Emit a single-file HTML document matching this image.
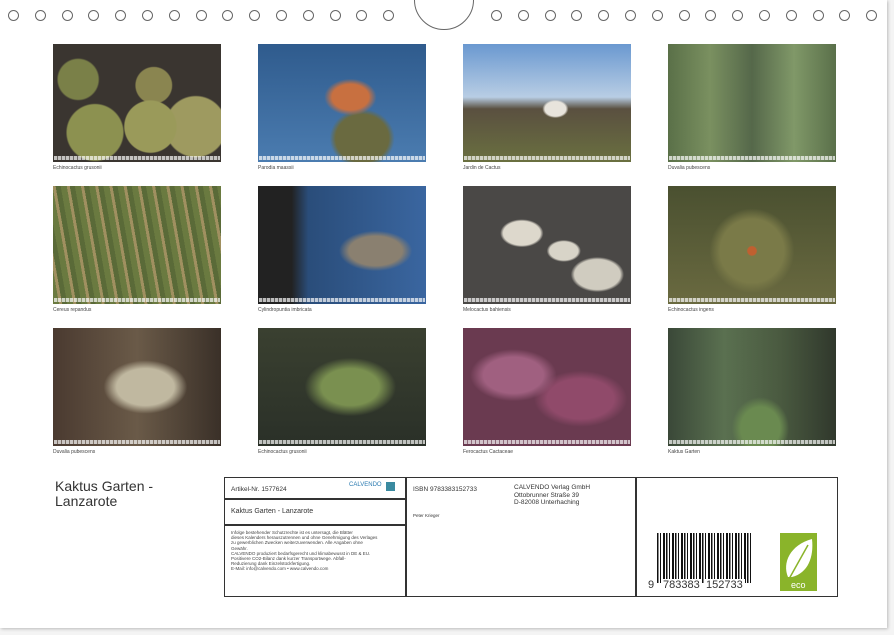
<!DOCTYPE html>
<html><head><meta charset="utf-8"><style>
body{margin:0;width:894px;height:635px;background:#f4f4f4;position:relative;overflow:hidden;font-family:"Liberation Sans",sans-serif;color:#333}
.page{position:absolute;left:0;top:0;width:887px;height:628px;background:#fff;box-shadow:1px 1px 3px #bbb}
.hole{position:absolute;top:10px;width:11px;height:11px;border:1.3px solid #666;border-radius:50%;box-sizing:border-box}
.arc{position:absolute;left:414px;top:-30px;width:60px;height:60px;border:1.3px solid #666;border-radius:50%;box-sizing:border-box;background:#fff}
.ph{position:absolute;width:168px;height:118px;overflow:hidden}
.ph .strip{position:absolute;left:1px;right:1px;bottom:2px;height:4px;background:repeating-linear-gradient(90deg,rgba(255,255,255,.7) 0 3px,rgba(255,255,255,.25) 3px 4px)}
.cap{position:absolute;font-size:5px;color:#444}
.box{position:absolute;left:224px;top:477px;width:614px;height:120px;border:1.5px solid #333;box-sizing:border-box}
.t{position:absolute;white-space:nowrap}
</style></head><body>
<div class="page">
<div class="arc"></div>
<div id="holes"></div>

<div class="ph" style="left:53px;top:44px;background:radial-gradient(circle at 25% 75%,#8c9150 0 18%,transparent 19%),radial-gradient(circle at 58% 70%,#9a9a5a 0 20%,transparent 21%),radial-gradient(circle at 85% 70%,#9e9a60 0 18%,transparent 19%),radial-gradient(circle at 60% 35%,#8a8550 0 14%,transparent 15%),radial-gradient(circle at 15% 30%,#7a8048 0 12%,transparent 13%),#3a3530"><div class="strip"></div></div>
<div class="ph" style="left:258px;top:44px;background:radial-gradient(ellipse at 55% 45%,#c87040 0 14%,transparent 20%),radial-gradient(ellipse at 62% 80%,#6a6a40 0 18%,transparent 22%),linear-gradient(#2f5b8d,#4b7cb0)"><div class="strip"></div></div>
<div class="ph" style="left:463px;top:44px;background:radial-gradient(ellipse at 55% 55%,#e8e4dc 0 8%,transparent 10%),linear-gradient(#6a98d0 0,#b8cde4 45%,#5a5040 55%,#6a7040 100%)"><div class="strip"></div></div>
<div class="ph" style="left:668px;top:44px;background:linear-gradient(90deg,#5a7048,#7a9060,#55684a,#809868,#5a704a);"><div class="strip"></div></div>

<div class="ph" style="left:53px;top:186px;background:repeating-linear-gradient(80deg,#6a7a40 0 6px,#a09060 6px 9px,#5a6a38 9px 14px)"><div class="strip"></div></div>
<div class="ph" style="left:258px;top:186px;background:radial-gradient(ellipse at 70% 55%,#8a8070 0 16%,transparent 22%),linear-gradient(90deg,#222 0 20%,#2a4d7a 30%,#3a66a0 100%)"><div class="strip"></div></div>
<div class="ph" style="left:463px;top:186px;background:radial-gradient(ellipse at 35% 40%,#ddd8cc 0 12%,transparent 14%),radial-gradient(ellipse at 60% 55%,#d8d4c8 0 10%,transparent 12%),radial-gradient(ellipse at 80% 75%,#d0ccc0 0 12%,transparent 14%),#4a4846"><div class="strip"></div></div>
<div class="ph" style="left:668px;top:186px;background:radial-gradient(circle at 50% 55%,#c06030 0 4%,#7a7a48 5% 30%,transparent 40%),linear-gradient(#4a5030,#6a6a40)"><div class="strip"></div></div>

<div class="ph" style="left:53px;top:328px;background:radial-gradient(ellipse at 55% 50%,#c0b8a0 0 22%,transparent 32%),linear-gradient(90deg,#4a3a30,#6a5a48,#3a3028)"><div class="strip"></div></div>
<div class="ph" style="left:258px;top:328px;background:radial-gradient(ellipse at 55% 50%,#7a9050 0 22%,transparent 35%),linear-gradient(#3a4030,#2a3028)"><div class="strip"></div></div>
<div class="ph" style="left:463px;top:328px;background:radial-gradient(ellipse at 30% 40%,#a06080 0 18%,transparent 26%),radial-gradient(ellipse at 70% 60%,#904a6a 0 20%,transparent 28%),#6a3a50"><div class="strip"></div></div>
<div class="ph" style="left:668px;top:328px;background:radial-gradient(ellipse at 55% 85%,#6a8a50 0 15%,transparent 22%),linear-gradient(90deg,#3a4838,#5a7050,#4a5a40,#30382c)"><div class="strip"></div></div>

<div class="cap" style="left:53px;top:165px">Echinocactus grusonii</div>
<div class="cap" style="left:258px;top:165px">Parodia maassii</div>
<div class="cap" style="left:463px;top:165px">Jardin de Cactus</div>
<div class="cap" style="left:668px;top:165px">Duvalia pubescens</div>
<div class="cap" style="left:53px;top:307px">Cereus repandus</div>
<div class="cap" style="left:258px;top:307px">Cylindropuntia imbricata</div>
<div class="cap" style="left:463px;top:307px">Melocactus bahiensis</div>
<div class="cap" style="left:668px;top:307px">Echinocactus ingens</div>
<div class="cap" style="left:53px;top:449px">Duvalia pubescens</div>
<div class="cap" style="left:258px;top:449px">Echinocactus grusonii</div>
<div class="cap" style="left:463px;top:449px">Ferocactus Cactaceae</div>
<div class="cap" style="left:668px;top:449px">Kaktus Garten</div>

<div class="t" style="left:55px;top:479px;font-size:14px;line-height:15px;color:#333">Kaktus Garten -<br>Lanzarote</div>

<div class="box">
 <div style="position:absolute;left:180px;top:-1px;width:1.5px;height:120px;background:#333"></div>
 <div style="position:absolute;left:410px;top:-1px;width:1.5px;height:120px;background:#333"></div>
 <div style="position:absolute;left:0;top:20px;width:181px;height:1.5px;background:#333"></div>
 <div style="position:absolute;left:0;top:46px;width:181px;height:1.5px;background:#333"></div>
 <div class="t" style="left:6px;top:8px;font-size:6.5px">Artikel-Nr. 1577624</div>
 <div class="t" style="left:124px;top:4px;font-size:6px;color:#2a7ab0">CALVENDO</div>
 <div style="position:absolute;left:161px;top:4px;width:9px;height:9px;background:#3a8aa0"></div>
 <div class="t" style="left:6px;top:30px;font-size:7px">Kaktus Garten - Lanzarote</div>
 <div class="t" style="left:6px;top:52px;font-size:4.5px;line-height:5.2px;color:#444">Infolge bestehender Schutzrechte ist es untersagt, die Blätter<br>dieses Kalenders herauszutrennen und ohne Genehmigung des Verlages<br>zu gewerblichen Zwecken weiterzuverwenden. Alle Angaben ohne<br>Gewähr.<br>CALVENDO produziert bedarfsgerecht und klimabewusst in DE &amp; EU.<br>Positivere CO2-Bilanz dank kurzer Transportwege. Abfall-<br>Reduzierung dank Einzelstückfertigung.<br>E-Mail: info@calvendo.com • www.calvendo.com</div>
 <div class="t" style="left:188px;top:8px;font-size:6.5px">ISBN 9783383152733</div>
 <div class="t" style="left:188px;top:35px;font-size:4.5px">Peter Krieger</div>
 <div class="t" style="left:289px;top:6px;font-size:6.5px;line-height:7.5px">CALVENDO Verlag GmbH<br>Ottobrunner Straße 39<br>D-82008 Unterhaching</div>
 <div style="position:absolute;left:432px;top:55px;width:95px;height:50px;background:repeating-linear-gradient(90deg,#111 0 1.5px,#fff 1.5px 3px,#111 3px 4px,#fff 4px 6px,#111 6px 8px,#fff 8px 9px)"></div>
 <div class="t" style="left:422px;top:101px;font-size:11px;background:#fff;padding:0 1px">9</div>
 <div class="t" style="left:436px;top:101px;font-size:11px;background:#fff;padding:0 2px">783383</div>
 <div class="t" style="left:479px;top:101px;font-size:11px;background:#fff;padding:0 2px">152733</div>
 <div style="position:absolute;left:555px;top:55px;width:37px;height:58px;background:#8ab42a">
  <svg width="37" height="58"><path d="M8 44 C2 30 10 12 32 6 C34 24 28 40 12 44 Z" fill="#fff"/><path d="M9 46 L28 12" stroke="#8ab42a" stroke-width="1.5"/><text x="11" y="55" font-size="9" fill="#fff" font-family="Liberation Sans">eco</text></svg>
 </div>
</div>
</div>
<script>
var h=document.getElementById('holes'),s='';
for(var i=0;i<15;i++){s+='<div class="hole" style="left:'+(8+i*26.8)+'px"></div>';s+='<div class="hole" style="left:'+(491+i*26.8)+'px"></div>';}
h.innerHTML=s;
</script>
</body></html>
